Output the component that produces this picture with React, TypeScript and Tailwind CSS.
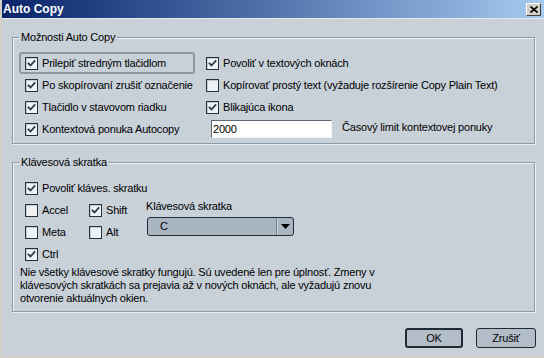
import React from "react";

function Check({ checked }: { checked: boolean }) {
  return (
    <span className="w-[13px] h-[13px] shrink-0 border border-[#24323f] bg-[#eef2f5] shadow-[inset_1px_1px_0_#c4ccd4] flex items-center justify-center">
      {checked && (
        <svg width="9" height="9" viewBox="0 0 9 9">
          <polyline points="1.5,4.5 3.5,6.5 7.5,2" fill="none" stroke="#2c3b4a" strokeWidth="1.8" strokeLinecap="square" />
        </svg>
      )}
    </span>
  );
}

function Item({ checked, label, focus, w }: { checked: boolean; label: string; focus?: boolean; w?: string }) {
  return (
    <div
      className={
        "h-[22px] flex items-center gap-[4px] pl-[4px] border-2 rounded-[3px] " +
        (focus ? "border-[#8d99a5] " : "border-transparent ") +
        (w ?? "")
      }
    >
      <Check checked={checked} />
      <span className="whitespace-nowrap">{label}</span>
    </div>
  );
}

function Group({ title, children, className }: { title: string; children: React.ReactNode; className?: string }) {
  return (
    <div className={"relative border border-[#8d99a5] shadow-[1px_1px_0_#eef2f5,inset_1px_1px_0_#eef2f5] " + (className ?? "")}>
      <span className="absolute -top-[7px] left-[6px] px-[2px] bg-[#c8d0d8] leading-[13px]">{title}</span>
      {children}
    </div>
  );
}

export default function App() {
  return (
    <div className="w-[544px] h-[358px] bg-[#c8d0d8] border-l-2 border-b-2 border-[#d4d0c8] flex flex-col text-[11px] leading-[13px] tracking-[-0.2px] text-black font-['Liberation_Sans',Arial,sans-serif] overflow-hidden">
      <div className="h-[18px] shrink-0 flex items-center bg-gradient-to-r from-[#0a246a] to-[#a6caf0] pl-[1px] pr-[3px]">
        <span className="text-white font-bold text-[12px] tracking-normal">Auto Copy</span>
        <div className="ml-auto w-[15px] h-[13px] bg-[#d4d0c8] border border-t-white border-l-white border-r-[#404040] border-b-[#404040] flex items-center justify-center">
          <svg width="8" height="7" viewBox="0 0 8 7">
            <path d="M0.5 0.5 L7.5 6.5 M7.5 0.5 L0.5 6.5" stroke="#000" strokeWidth="1.6" />
          </svg>
        </div>
      </div>
      <div className="h-px bg-[#e4e9ee] shrink-0" />
      <div className="flex-1 flex flex-col pl-[10px] pr-[9px]">
        <Group title="Možnosti Auto Copy" className="mt-[18px] pt-[14px] pb-[3px] pl-[6px]">
          <div className="grid grid-cols-[181px_1fr]">
            <Item checked label="Prilepiť stredným tlačidlom" focus w="w-[176px]" />
            <Item checked label="Povoliť v textových oknách" />
            <Item checked label="Po skopírovaní zrušiť označenie" />
            <Item checked={false} label="Kopírovať prostý text (vyžaduje rozšírenie Copy Plain Text)" />
            <Item checked label="Tlačidlo v stavovom riadku" />
            <Item checked label="Blikajúca ikona" />
            <Item checked label="Kontextová ponuka Autocopy" />
            <div className="h-[22px] flex items-center pl-[11px] gap-[10px]">
              <div className="w-[121px] h-[18px] bg-white border border-t-[#5d6976] border-l-[#5d6976] border-b-[#eef2f5] border-r-[#eef2f5] flex items-center pl-[1px]">
                2000
              </div>
              <span className="whitespace-nowrap -mt-[3px]">Časový limit kontextovej ponuky</span>
            </div>
          </div>
        </Group>

        <Group title="Klávesová skratka" className="mt-[18px] pt-[14px] pb-[6px] pl-[6px]">
          <Item checked label="Povoliť kláves. skratku" />
          <div className="flex">
            <div className="grid grid-cols-[64px_64px]">
              <Item checked={false} label="Accel" />
              <Item checked label="Shift" />
              <Item checked={false} label="Meta" />
              <Item checked={false} label="Alt" />
            </div>
            <div className="flex flex-col pt-[1px]">
              <span className="-ml-px whitespace-nowrap">Klávesová skratka</span>
              <div className="mt-[4px] w-[147px] h-[19px] border border-[#1e2a36] rounded-[3px] bg-[#a9b5c1] flex items-stretch">
                <span className="flex-1 flex items-center pl-[12px]">C</span>
                <span className="w-[17px] border-l border-l-[#6f7b87] shadow-[inset_1px_0_0_#cdd5dd] flex items-center justify-center">
                  <svg width="9" height="5" viewBox="0 0 9 5">
                    <path d="M0 0 L9 0 L4.5 5 Z" fill="#000" />
                  </svg>
                </span>
              </div>
            </div>
          </div>
          <Item checked label="Ctrl" />
          <p className="mt-[1px] ml-[1px] leading-[13px]">
            Nie všetky klávesové skratky fungujú. Sú uvedené len pre úplnosť. Zmeny v<br />
            klávesových skratkách sa prejavia až v nových oknách, ale vyžadujú znovu<br />
            otvorenie aktuálnych okien.
          </p>
        </Group>

        <div className="mt-[16px] flex justify-end gap-[13px] -mr-px">
          <button className="w-[58px] h-[20px] border-2 border-[#1e2a36] rounded-[3px] bg-[#b3bdc8] flex items-center justify-center">OK</button>
          <button className="w-[60px] h-[20px] border border-[#1e2a36] rounded-[3px] bg-[#b3bdc8] flex items-center justify-center">Zrušiť</button>
        </div>
      </div>
    </div>
  );
}
